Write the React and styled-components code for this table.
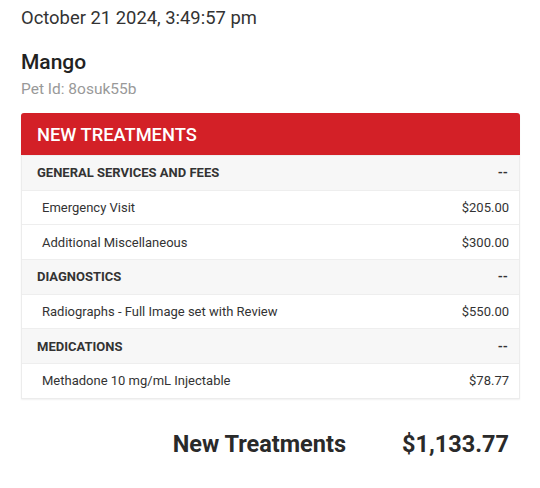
import React from "react";
import styled, { createGlobalStyle } from "styled-components";

const GlobalStyle = createGlobalStyle`
  body {
    margin: 0;
    background: #ffffff;
    font-family: Roboto, "Liberation Sans", sans-serif;
    color: #333333;
  }
`;

const Page = styled.div`
  width: 540px;
  padding: 8px 20px 0 21px;
  box-sizing: border-box;
`;

const DateLine = styled.div`
  font-size: 18.4px;
  line-height: 20px;
  color: #333;
`;

const PetName = styled.div`
  margin-top: 23px;
  font-size: 21px;
  font-weight: 500;
  line-height: 22px;
  color: #222;
`;

const PetId = styled.div`
  margin-top: 8px;
  font-size: 15.5px;
  line-height: 17px;
  color: #999;
`;

const Card = styled.div`
  margin-top: 15px;
  border: 1px solid #ececec;
  border-top: none;
  border-radius: 3px 3px 0 0;
  box-shadow: 0 1px 2px rgba(0, 0, 0, 0.06);
`;

const CardHeader = styled.div`
  height: 42px;
  display: flex;
  align-items: center;
  padding: 0 16px;
  background: #d32027;
  color: #fff;
  font-size: 18.3px;
  font-weight: 500;
  border-radius: 3px 3px 0 0;
  margin: 0 -1px;
`;

const Row = styled.div`
  height: 34.7px;
  display: flex;
  align-items: center;
  justify-content: space-between;
  padding: ${(p) => (p.$section ? "0 11px 0 15px" : "0 10px 0 20px")};
  background: ${(p) => (p.$section ? "#f7f7f7" : "#fff")};
  border-top: 1px solid #eeeeee;
  box-sizing: border-box;
  font-size: 13px;
  font-weight: ${(p) => (p.$section ? 700 : 400)};
  color: #333;
  &:first-of-type {
    border-top: none;
  }
`;

const Total = styled.div`
  display: flex;
  justify-content: flex-end;
  gap: 56px;
  padding: 31px 11px 0 0;
  font-size: 23.5px;
  font-weight: 700;
  color: #2a2a2a;
`;

const sections = [
  {
    name: "GENERAL SERVICES AND FEES",
    items: [
      ["Emergency Visit", "$205.00"],
      ["Additional Miscellaneous", "$300.00"],
    ],
  },
  {
    name: "DIAGNOSTICS",
    items: [["Radiographs - Full Image set with Review", "$550.00"]],
  },
  {
    name: "MEDICATIONS",
    items: [["Methadone 10 mg/mL Injectable", "$78.77"]],
  },
];

export default function App() {
  return (
    <>
      <GlobalStyle />
      <Page>
        <DateLine>October 21 2024, 3:49:57 pm</DateLine>
        <PetName>Mango</PetName>
        <PetId>Pet Id: 8osuk55b</PetId>
        <Card>
          <CardHeader>NEW TREATMENTS</CardHeader>
          {sections.map((s) => (
            <React.Fragment key={s.name}>
              <Row $section>
                <span>{s.name}</span>
                <span>--</span>
              </Row>
              {s.items.map(([label, price]) => (
                <Row key={label}>
                  <span>{label}</span>
                  <span>{price}</span>
                </Row>
              ))}
            </React.Fragment>
          ))}
        </Card>
        <Total>
          <span>New Treatments</span>
          <span>$1,133.77</span>
        </Total>
      </Page>
    </>
  );
}
